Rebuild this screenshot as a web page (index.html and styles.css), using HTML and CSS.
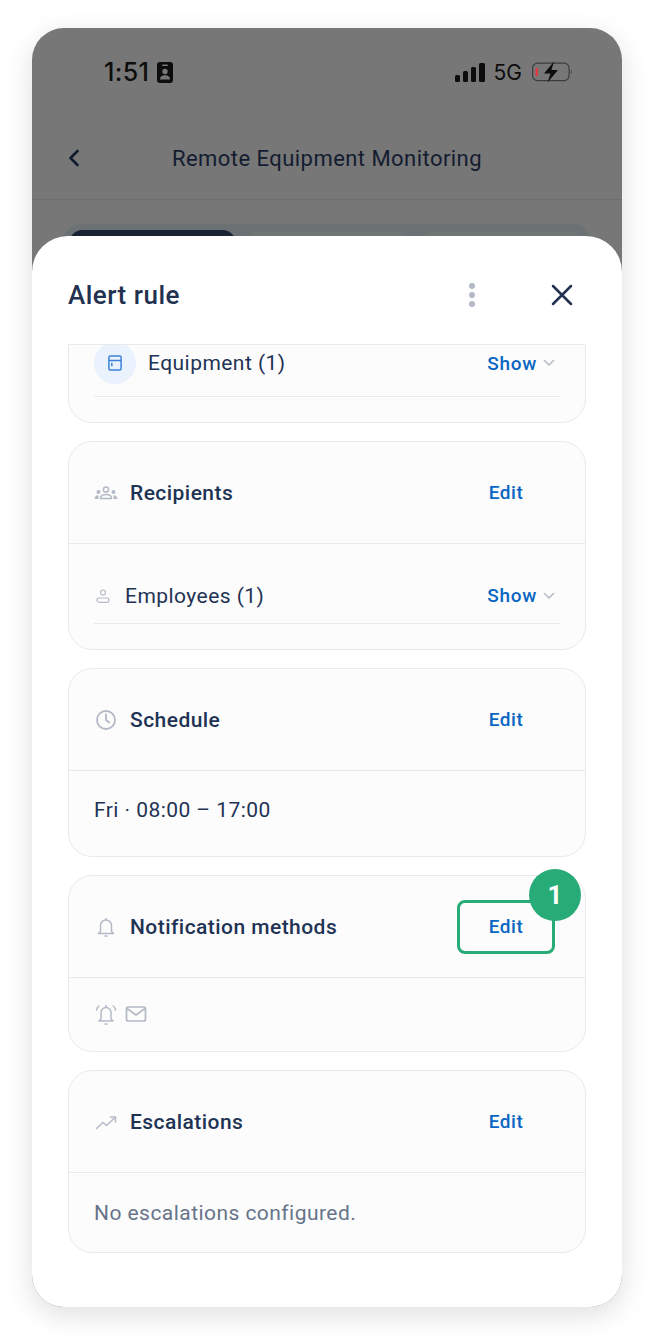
FILE: index.html
```html
<!DOCTYPE html>
<html lang="en">
  <head>
    <meta charset="UTF-8" />
    <meta name="viewport" content="width=device-width, initial-scale=1.0" />
    <title>Alert rule</title>
    <link rel="stylesheet" href="styles.css">
  </head>
  <body>
    <div class="phone">
      <!-- Dimmed page behind the sheet -->
      <div class="status-bar">
        <div class="status-left">
          <span class="clock">1:51</span>
          <svg class="badge-icon" width="16" height="21" viewBox="0 0 16 21">
            <rect width="16" height="21" rx="3" fill="#0d0d0d"/>
            <rect x="5" y="2.500" width="6" height="1.600" rx=".8" fill="#777"/>
            <circle cx="8" cy="9.500" r="2.700" fill="#777"/>
            <path d="M3 17.500c0-3 2.300-4.300 5-4.300s5 1.300 5 4.300z" fill="#777"/>
          </svg>
        </div>
        <div class="status-right">
          <svg width="30" height="19" viewBox="0 0 30 19" fill="#0d0d0d">
            <rect x="0" y="12" width="5" height="7" rx="1.500"/>
            <rect x="8" y="8" width="5" height="11" rx="1.500"/>
            <rect x="16" y="4" width="5" height="15" rx="1.500"/>
            <rect x="24" y="0" width="6" height="19" rx="1.500"/>
          </svg>
          <span class="network">5G</span>
          <svg width="41" height="22" viewBox="0 0 41 22">
            <rect x=".6" y="2.100" width="36.500" height="17.500" rx="5" fill="none" stroke="#3c3c3c" stroke-width="1.200"/>
            <rect x="3.500" y="7" width="2.500" height="8" rx="1" fill="#e0393e"/>
            <path d="M38.800 8.500c1.200.5 1.200 4 0 4.500z" fill="#3c3c3c"/>
            <path d="M22 .5 12 12.500h6.500L15.500 21.500 26 9h-6.500z" fill="#0d0d0d"/>
          </svg>
        </div>
      </div>
      <div class="nav-bar">
        <svg class="back" width="12" height="18" viewBox="0 0 12 18" fill="none" stroke="#111b30" stroke-width="2.600" stroke-linecap="round" stroke-linejoin="round">
          <path d="M9.500 2 2.500 9l7 7"/>
        </svg>
        <span class="nav-title">Remote Equipment Monitoring</span>
      </div>
      <div class="tabs">
        <div class="tab tab-active"></div>
        <div class="tab"></div>
        <div class="tab"></div>
      </div>

      <!-- Bottom sheet -->
      <div class="sheet">
        <div class="sheet-head">
          <h2>Alert rule</h2>
          <div class="sheet-actions">
            <svg width="8" height="26" viewBox="0 0 8 26" fill="#b4b9c6">
              <circle cx="4" cy="4" r="3"/>
              <circle cx="4" cy="13" r="3"/>
              <circle cx="4" cy="22" r="3"/>
            </svg>
            <svg width="22" height="22" viewBox="0 0 22 22" fill="none" stroke="#22314f" stroke-width="2.500" stroke-linecap="round">
              <path d="M2 2l18 18M20 2 2 20"/>
            </svg>
          </div>
        </div>

        <div class="sheet-body">
          <div class="card card-cut">
            <div class="list-row list-row-cut">
              <span class="icon-circle">
                <svg width="14" height="16" viewBox="0 0 14 16" fill="none" stroke="#3b82d6" stroke-width="1.500">
                  <rect x=".9" y=".9" width="12.200" height="14.200" rx="1.500"/>
                  <path d="M1 5.500h12M3.800 7.800v3.400"/>
                </svg>
              </span>
              <span class="list-label">Equipment (1)</span>
              <span class="show">Show</span>
              <svg class="chevron" width="12" height="8" viewBox="0 0 12 8" fill="none" stroke="#b4b9c6" stroke-width="1.500" stroke-linecap="round" stroke-linejoin="round">
                <path d="M1.500 1.500 6 6l4.500-4.500"/>
              </svg>
            </div>
          </div>

          <div class="card">
            <div class="card-head">
              <svg class="head-icon" width="24" height="24" viewBox="0 0 24 24" fill="#b4b9c6">
                <circle cx="12" cy="8.500" r="2.600" fill="none" stroke="#b4b9c6" stroke-width="1.500"/>
                <path d="M6.500 17.500c0-2.800 2.400-4 5.500-4s5.500 1.200 5.500 4z" fill="none" stroke="#b4b9c6" stroke-width="1.500"/>
                <circle cx="4.500" cy="11" r="2"/>
                <circle cx="19.500" cy="11" r="2"/>
                <path d="M0.500 18c0-2.500 1.500-3.800 4-3.800v3.800zM23.500 18c0-2.500-1.500-3.800-4-3.800v3.800z"/>
              </svg>
              <h3>Recipients</h3>
              <a class="edit">Edit</a>
            </div>
            <div class="list-row list-row-plain">
              <svg class="person" width="14" height="14" viewBox="0 0 14 14" fill="none" stroke="#b4b9c6" stroke-width="1.200">
                <circle cx="7" cy="3.500" r="2.500"/>
                <rect x="1" y="9" width="12" height="4.300" rx="2.100"/>
              </svg>
              <span class="list-label">Employees (1)</span>
              <span class="show">Show</span>
              <svg class="chevron" width="12" height="8" viewBox="0 0 12 8" fill="none" stroke="#b4b9c6" stroke-width="1.500" stroke-linecap="round" stroke-linejoin="round">
                <path d="M1.500 1.500 6 6l4.500-4.500"/>
              </svg>
            </div>
          </div>

          <div class="card">
            <div class="card-head">
              <svg class="head-icon" width="24" height="24" viewBox="0 0 24 24" fill="none" stroke="#b4b9c6" stroke-width="1.800" stroke-linecap="round">
                <circle cx="12" cy="12" r="9"/>
                <path d="M12 6.500V12l3.200 2.500"/>
              </svg>
              <h3>Schedule</h3>
              <a class="edit">Edit</a>
            </div>
            <div class="card-text card-text-schedule">Fri · 08:00 – 17:00</div>
          </div>

          <div class="card">
            <div class="card-head">
              <svg class="head-icon" width="24" height="24" viewBox="0 0 24 24" fill="none" stroke="#b4b9c6" stroke-width="1.500" stroke-linecap="round" stroke-linejoin="round">
                <path d="M6.500 16.500V10.500a5.500 5.500 0 0 1 11 0v6l2 2h-15z"/>
                <path d="M12 3.500V5M11 21h2"/>
              </svg>
              <h3>Notification methods</h3>
              <a class="edit edit-marked">Edit</a>
              <span class="step-badge">1</span>
            </div>
            <div class="card-icons">
              <svg width="24" height="24" viewBox="0 0 24 24" fill="none" stroke="#b4b9c6" stroke-width="1.500" stroke-linecap="round" stroke-linejoin="round">
                <path d="M7 17V10.500a5 5 0 0 1 10 0V17l2 2H5z"/>
                <path d="M12 3.500V5M11 22h2M2.500 8c.3-1.700 1-3 2.300-4M21.500 8c-.3-1.700-1-3-2.300-4"/>
              </svg>
              <svg width="22" height="18" viewBox="0 0 22 18" fill="none" stroke="#b4b9c6" stroke-width="1.700" stroke-linejoin="round">
                <rect x="1.500" y="2" width="19" height="14" rx="2"/>
                <path d="M2 3.500l9 6.500 9-6.500"/>
              </svg>
            </div>
          </div>

          <div class="card">
            <div class="card-head">
              <svg class="head-icon" width="24" height="24" viewBox="0 0 24 24" fill="none" stroke="#b4b9c6" stroke-width="1.500" stroke-linecap="round" stroke-linejoin="round">
                <path d="M2.500 18.500 9 12.500l3.500 3L21 7.500"/>
                <path d="M16.500 7H21.500V12"/>
              </svg>
              <h3>Escalations</h3>
              <a class="edit">Edit</a>
            </div>
            <div class="card-text card-text-muted">No escalations configured.</div>
          </div>
        </div>
      </div>
    </div>
  </body>
</html>
```

FILE: styles.css
```css
* {
  margin: 0;
  padding: 0;
  box-sizing: border-box;
  font-family: "Roboto", sans-serif;
}

html,
body {
  height: 100%;
  background: #fff;
  overflow: hidden;
}

/* Phone frame */
.phone {
  position: relative;
  width: 590px;
  height: 1279px;
  margin: 28px 32px;
  border-radius: 32px;
  background: #777;
  box-shadow: 0 8px 28px rgba(0, 0, 0, 0.13);
  overflow: hidden;
}

/* Status bar */
.status-bar {
  height: 88px;
  padding: 32px 49px 0 72px;
  display: flex;
  justify-content: space-between;
  align-items: flex-start;
}

.status-left,
.status-right {
  display: flex;
  align-items: center;
  height: 24px;
}

.clock {
  font-family: "Inter", sans-serif;
  font-size: 25px;
  font-weight: 500;
  letter-spacing: 0.4px;
  color: #0d0d0d;
}

.badge-icon {
  margin-left: 8px;
}

.network {
  font-family: "Inter", sans-serif;
  font-size: 21px;
  color: #0d0d0d;
  margin: 0 10px 0 9px;
}

/* Nav bar */
.nav-bar {
  height: 84px;
  padding-top: 2px;
  position: relative;
  display: flex;
  justify-content: center;
  align-items: center;
  border-bottom: 1px solid #6e6e6e;
}

.back {
  position: absolute;
  left: 36px;
  top: 33px;
}

.nav-title {
  font-size: 22px;
  letter-spacing: 0.45px;
  color: #131c30;
}

/* Tabs behind the sheet */
.tabs {
  margin: 24px 32px 0;
  height: 40px;
  padding: 6px 6px 0;
  display: flex;
  gap: 10px;
  background: #6c7173;
  border-radius: 16px;
}

.tab {
  flex: 1;
  margin-top: 2px;
  background: #727576;
  border-radius: 12px;
}

.tab-active {
  margin-top: 0;
  background: #1a2333;
}

/* Bottom sheet */
.sheet {
  position: absolute;
  top: 208px;
  left: 0;
  right: 0;
  bottom: 0;
  background: #fff;
  border-radius: 36px 36px 0 0;
}

.sheet-head {
  height: 108px;
  padding: 10px 49px 0 36px;
  display: flex;
  justify-content: space-between;
  align-items: center;
}

.sheet-head h2 {
  font-size: 26px;
  font-weight: 500;
  color: #22314f;
  letter-spacing: 0.5px;
}

.sheet-actions {
  display: flex;
  align-items: center;
  gap: 75px;
}

.sheet-body {
  padding: 0 36px;
  display: flex;
  flex-direction: column;
  gap: 18.5px;
}

/* Cards */
.card {
  position: relative;
  background: #fcfcfd;
  border: 1px solid #e8eaee;
  border-radius: 24px;
}

.card-cut {
  height: 78.5px;
  border-radius: 0 0 24px 24px;
  overflow: hidden;
}

.card-head {
  position: relative;
  height: 102px;
  padding: 0 25px;
  display: flex;
  align-items: center;
  border-bottom: 1px solid #e8eaee;
}

.head-icon {
  margin-right: 12px;
}

.card-head h3 {
  flex: 1;
  font-size: 21px;
  font-weight: 500;
  color: #1f3354;
  letter-spacing: 0.45px;
}

.edit {
  width: 98px;
  height: 54px;
  display: flex;
  justify-content: center;
  align-items: center;
  font-size: 19px;
  font-weight: 500;
  letter-spacing: 0.5px;
  color: #0a66c2;
  border: 3px solid transparent;
  border-radius: 8px;
  margin-right: 5px;
}

.edit-marked {
  border-color: #27ab77;
}

.step-badge {
  position: absolute;
  top: -7px;
  left: 460px;
  width: 52px;
  height: 52px;
  border-radius: 50%;
  background: #27ab77;
  color: #fff;
  font-size: 26px;
  font-weight: 700;
  display: flex;
  justify-content: center;
  align-items: center;
}

/* Rows with a show toggle */
.list-row {
  margin: 0 25px;
  display: flex;
  align-items: center;
  border-bottom: 1px solid #e8eaee;
}

.list-row-cut {
  margin-top: -3px;
  padding-bottom: 12px;
}

.list-row-plain {
  margin-top: 24px;
  margin-bottom: 24.5px;
  height: 56px;
}

.icon-circle {
  width: 42px;
  height: 42px;
  border-radius: 50%;
  background: #e9f2fd;
  display: flex;
  justify-content: center;
  align-items: center;
  margin-right: 12px;
}

.person {
  margin: 0 15px 0 2px;
}

.list-label {
  flex: 1;
  font-size: 21px;
  color: #1f3354;
  letter-spacing: 0.45px;
}

.show {
  font-size: 19px;
  font-weight: 500;
  letter-spacing: 0.7px;
  color: #0a66c2;
}

.chevron {
  margin: 0 5px 0 6px;
}

/* Card bodies */
.card-text {
  padding: 0 25px;
  display: flex;
  align-items: center;
  font-size: 21px;
  letter-spacing: 0.45px;
  color: #1f3354;
}

.card-text-schedule {
  height: 84.5px;
  padding-bottom: 6px;
}

.card-text-muted {
  height: 79px;
  color: #66748a;
}

.card-icons {
  height: 72.5px;
  padding: 0 25px;
  display: flex;
  align-items: center;
  gap: 7px;
}
```
